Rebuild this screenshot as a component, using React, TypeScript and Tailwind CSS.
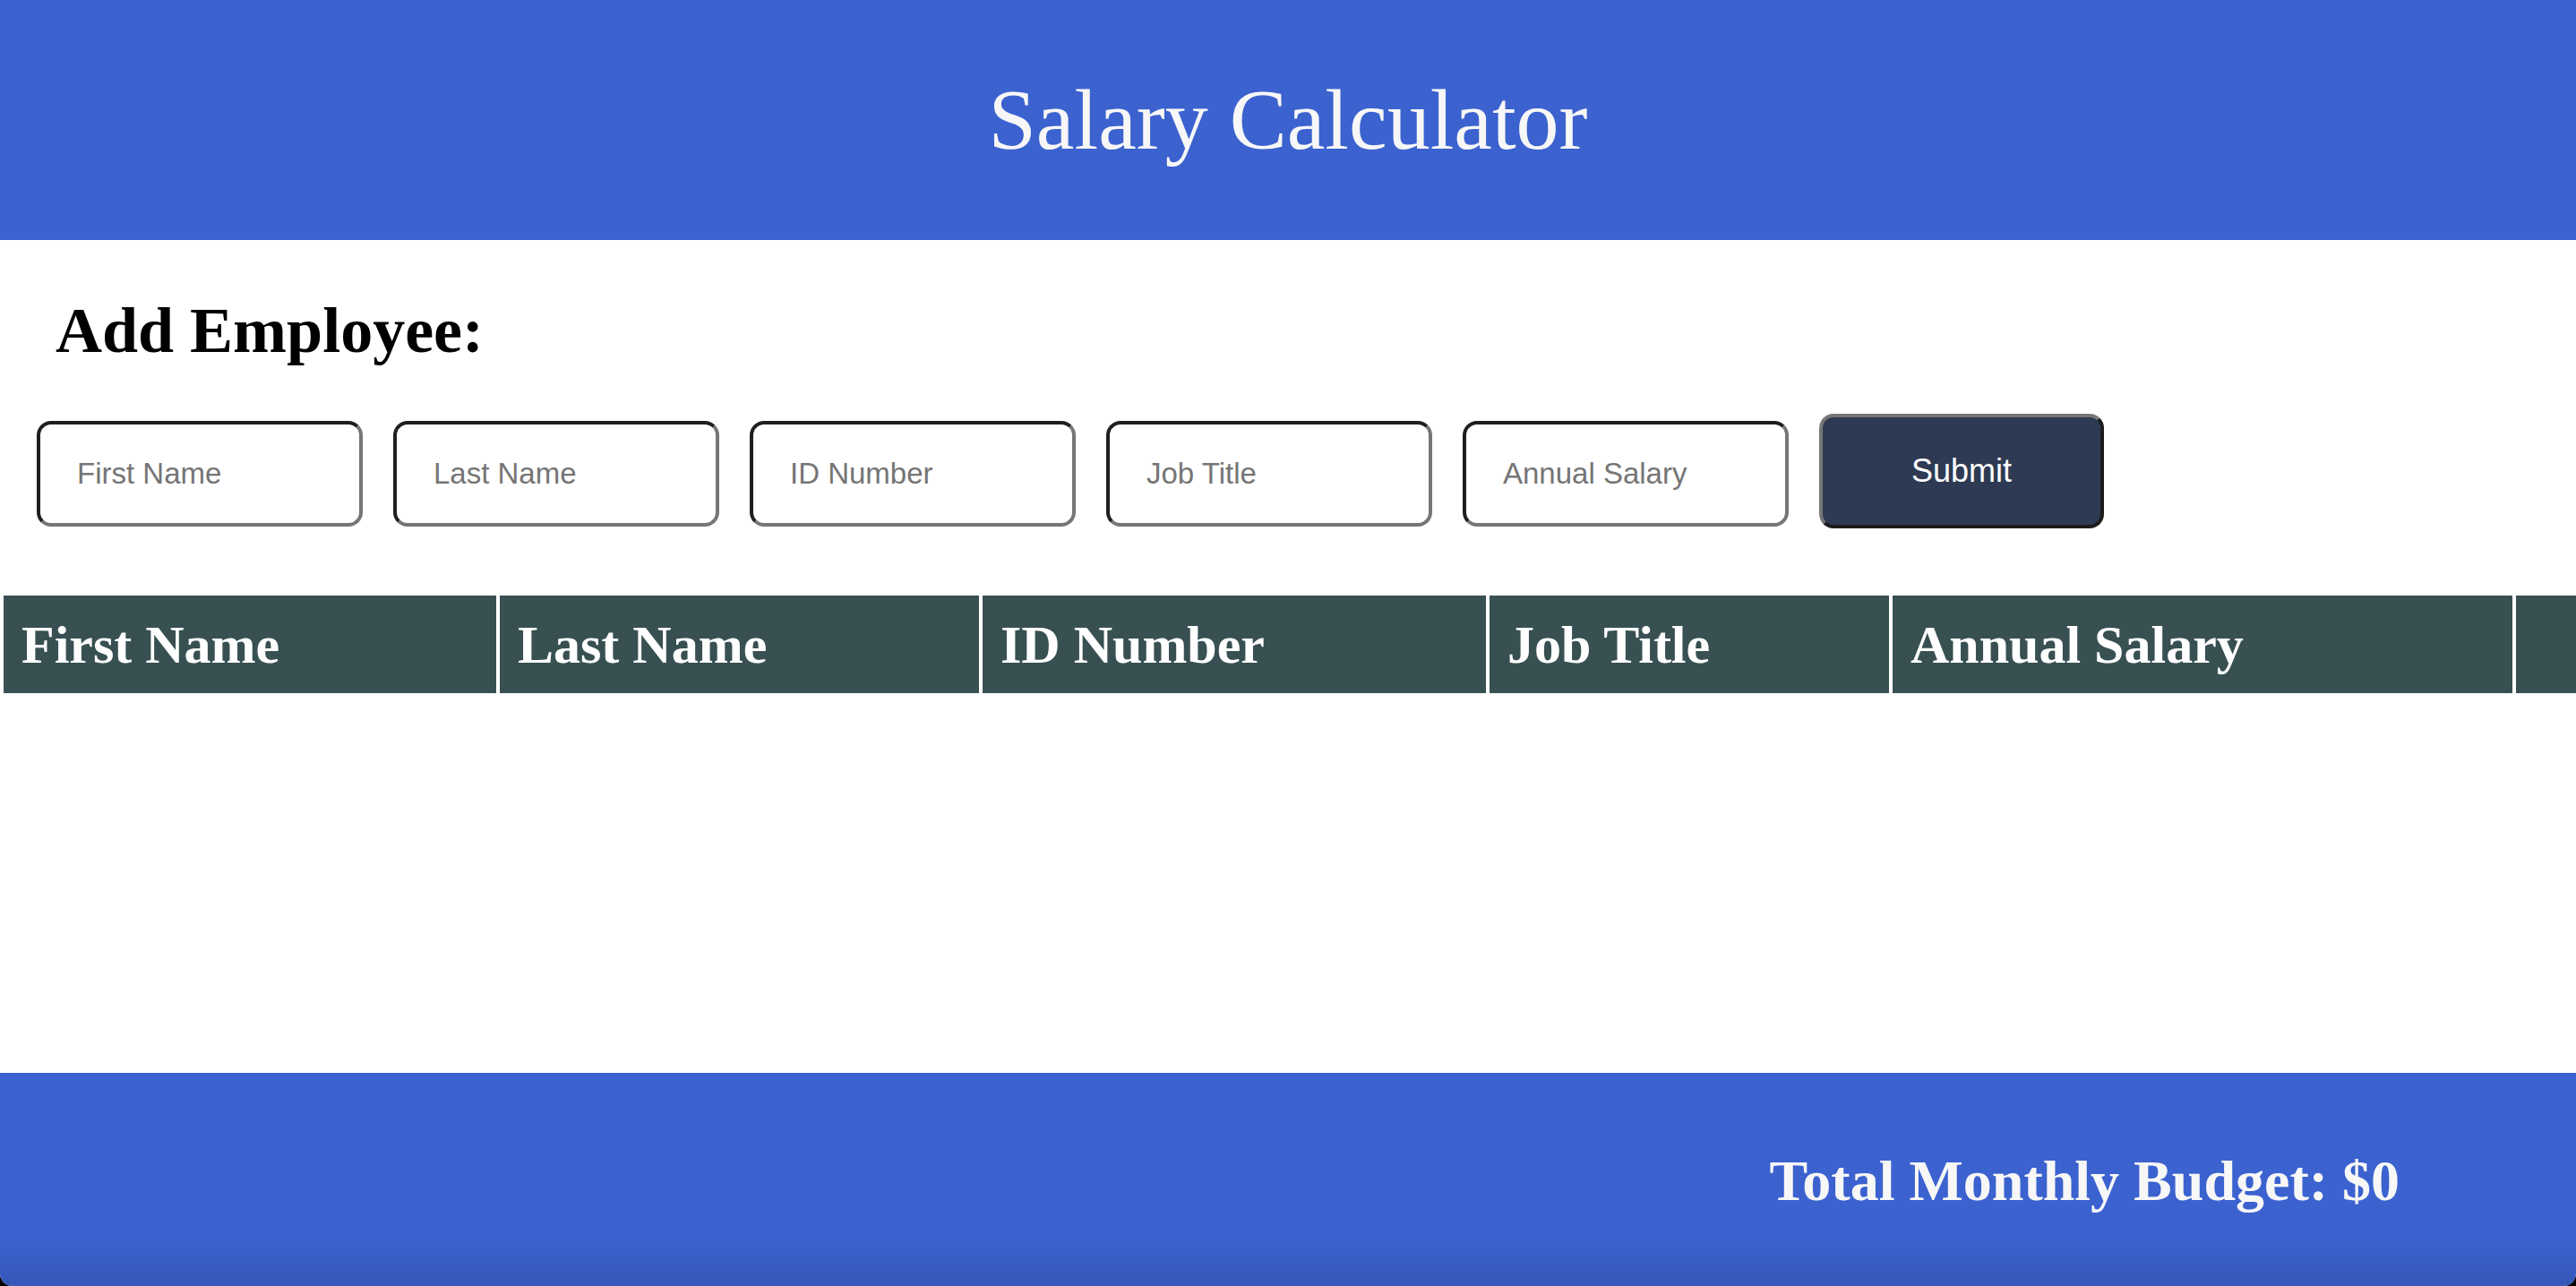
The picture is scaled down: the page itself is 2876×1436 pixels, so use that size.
import React from "react";

const columns = [
  { label: "First Name", w: "w-[550px]" },
  { label: "Last Name", w: "w-[535px]" },
  { label: "ID Number", w: "w-[562px]" },
  { label: "Job Title", w: "w-[446px]" },
  { label: "Annual Salary", w: "w-[692px]" },
];

const fields = ["First Name", "Last Name", "ID Number", "Job Title", "Annual Salary"];

export default function App() {
  return (
    <div className="h-[1436px] w-full bg-black overflow-hidden">
      <div className="flex h-full flex-col overflow-hidden rounded-b-[14px] bg-white font-['Liberation_Serif','Times_New_Roman',serif]">
        <header className="flex h-[268px] shrink-0 items-center justify-center bg-[#3b62cf]">
          <h1 className="text-[96px] font-normal leading-[110px] text-[#f7f7f7]">Salary Calculator</h1>
        </header>

        <main className="flex-1">
          <h2 className="pl-[62px] pt-[61px] text-[72px] font-bold leading-[80px] text-black">Add Employee:</h2>

          <form
            className="mt-[53px] flex items-start gap-[34px] px-[41px]"
            onSubmit={(e) => e.preventDefault()}
          >
            {fields.map((f) => (
              <input
                key={f}
                placeholder={f}
                className="mt-[8px] h-[118px] w-[364px] rounded-[16px] border-[4px] border-t-[#1f1f1f] border-l-[#1f1f1f] border-b-[#767676] border-r-[#767676] bg-white pl-[41px] font-['Liberation_Sans',Arial,sans-serif] text-[33px] text-black outline-none placeholder:text-[#757575]"
              />
            ))}
            <button
              type="submit"
              className="h-[128px] w-[318px] rounded-[16px] border-[4px] border-t-[#767676] border-l-[#767676] border-b-[#1c1c1c] border-r-[#1c1c1c] bg-[#2e3a53] font-['Liberation_Sans',Arial,sans-serif] text-[36px] text-white"
            >
              Submit
            </button>
          </form>

          <div className="mt-[75px] flex gap-[4px] overflow-hidden pl-[4px]">
            {columns.map((c) => (
              <div
                key={c.label}
                className={`${c.w} flex h-[109px] shrink-0 items-center bg-[#385052] pl-[20px] text-[60px] font-bold text-white`}
              >
                {c.label}
              </div>
            ))}
            <div className="h-[109px] w-[200px] shrink-0 bg-[#385052]" />
          </div>
        </main>

        <footer className="flex h-[238px] shrink-0 justify-end bg-[linear-gradient(to_bottom,#3b62cf_0px,#3b62cf_185px,#3457b8_238px)] pr-[197px] pt-[85px]">
          <span className="text-[64px] font-bold leading-[71px] text-[#f7f7f7]">Total Monthly Budget: $0</span>
        </footer>
      </div>
    </div>
  );
}
